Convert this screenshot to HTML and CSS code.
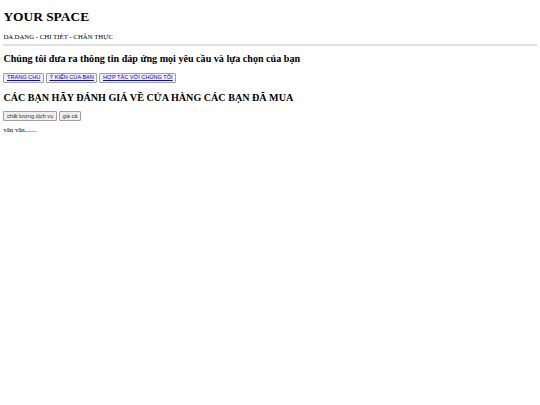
FILE: index.html
```html
<!DOCTYPE html>
<html lang="vi">
<head>
<meta charset="utf-8">
<title>YOUR SPACE</title>
<link rel="stylesheet" href="styles.css">
</head>
<body>
<header class="site-header">
  <h1 class="site-title">YOUR SPACE</h1>
  <p class="tagline">DA DẠNG - CHI TIẾT - CHÂN THỰC</p>
</header>
<hr class="divider">
<h2 class="heading">Chúng tôi đưa ra thông tin đáp ứng mọi yêu cầu và lựa chọn của bạn</h2>
<nav class="nav">
  <button class="btn"><a class="nav-link" href="#">TRANG CHỦ</a></button>
  <button class="btn"><a class="nav-link" href="#">Ý KIẾN CỦA BẠN</a></button>
  <button class="btn"><a class="nav-link" href="#">HỢP TÁC VỚI CHÚNG TÔI</a></button>
</nav>
<h2 class="heading heading-second">CÁC BẠN HÃY ĐÁNH GIÁ VỀ CỬA HÀNG CÁC BẠN ĐÃ MUA</h2>
<div class="actions">
  <button class="btn">chất lượng dịch vụ</button>
  <button class="btn">giá cả</button>
</div>
<p class="note">vân vân.......</p>
</body>
</html>
```

FILE: styles.css
```css
html, body {
  background: #ffffff;
}
body {
  margin: 0;
  padding: 0 3.4px;
  font-family: "Liberation Serif", "Times New Roman", serif;
  font-size: 6.8px;
  color: #000000;
}
.site-header {
  padding-top: 9.2px;
}
.site-title {
  margin: 0;
  font-size: 13.4px;
  font-weight: bold;
  line-height: 15px;
}
.tagline {
  margin: 8.6px 0 0;
  line-height: 7.5px;
}
.divider {
  margin: 3.6px 0 0;
  border: none;
  height: 2px;
  background: #e0e0e0;
}
.heading {
  margin: 7.4px 0 0;
  font-size: 10.1px;
  font-weight: bold;
  line-height: 11.3px;
}
.nav {
  display: flex;
  gap: 2px;
  margin-top: 8px;
}
.btn {
  margin: 0;
  padding: 0.8px 2.6px;
  font-family: "Liberation Sans", Arial, sans-serif;
  font-size: 5.6px;
  line-height: 6.5px;
  color: #333333;
  background: #efefef;
  border: 0.8px solid #a0a0a0;
  border-radius: 1px;
}
.nav-link {
  color: #0000ee;
  text-decoration: underline;
}
.heading-second {
  margin-top: 9.5px;
}
.actions {
  display: flex;
  gap: 2px;
  margin-top: 7.5px;
}
.note {
  margin: 5.4px 0 0;
  line-height: 7.5px;
}
```
